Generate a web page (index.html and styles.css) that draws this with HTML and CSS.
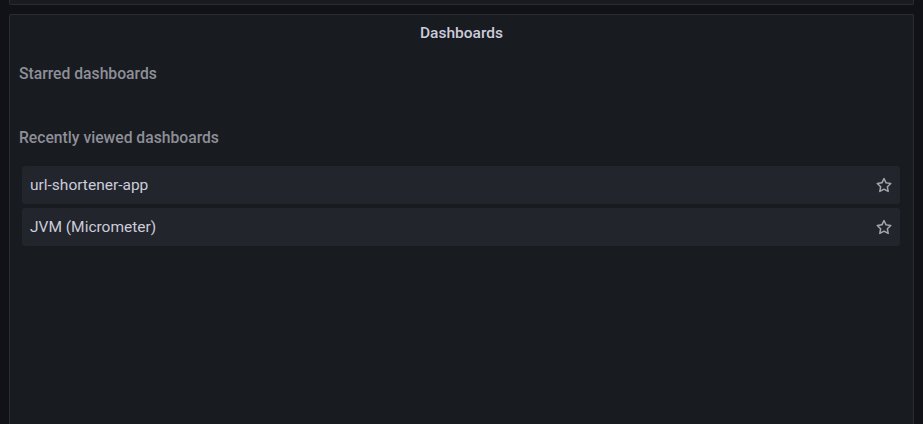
FILE: index.html
```html
<!DOCTYPE html>
<html lang="en">
<head>
<meta charset="utf-8">
<title>Dashboards</title>
<link rel="stylesheet" href="styles.css">
</head>
<body>
<div class="top-panel"></div>
<section class="panel">
  <header class="panel-header">Dashboards</header>
  <div class="panel-body">
    <h6 class="section-title starred">Starred dashboards</h6>
    <h6 class="section-title recent">Recently viewed dashboards</h6>
    <ul class="dash-list">
      <li class="dash-item">
        <span class="dash-name">url-shortener-app</span>
        <svg class="star" viewBox="0 0 24 24" width="18" height="18"><path d="M22,9.67A1,1,0,0,0,21.14,9l-5.69-.83L12.9,3a1,1,0,0,0-1.8,0L8.550,8.16,2.860,9a1,1,0,0,0-.81.68,1,1,0,0,0,.25,1l4.13,4-1,5.68A1,1,0,0,0,6.9,21.44L12,18.77l5.1,2.67a.93.93,0,0,0,.46.12,1,1,0,0,0,.59-.19,1,1,0,0,0,.4-1l-1-5.680,4.130-4A1,1,0,0,0,22,9.67Zm-6.15,4a1,1,0,0,0-.29.88l.72,4.2-3.760-2a1.06,1.06,0,0,0-.94,0l-3.76,2,.72-4.2a1,1,0,0,0-.29-.88l-3-3,4.21-.61a1,1,0,0,0,.76-.55L12,5.7l1.88,3.82a1,1,0,0,0,.76.55l4.21.61Z"/></svg>
      </li>
      <li class="dash-item">
        <span class="dash-name">JVM (Micrometer)</span>
        <svg class="star" viewBox="0 0 24 24" width="18" height="18"><path d="M22,9.67A1,1,0,0,0,21.14,9l-5.69-.83L12.9,3a1,1,0,0,0-1.8,0L8.550,8.16,2.860,9a1,1,0,0,0-.81.68,1,1,0,0,0,.25,1l4.13,4-1,5.68A1,1,0,0,0,6.9,21.44L12,18.77l5.1,2.67a.93.93,0,0,0,.46.12,1,1,0,0,0,.59-.19,1,1,0,0,0,.4-1l-1-5.680,4.130-4A1,1,0,0,0,22,9.67Zm-6.15,4a1,1,0,0,0-.29.88l.72,4.2-3.760-2a1.06,1.06,0,0,0-.94,0l-3.76,2,.72-4.2a1,1,0,0,0-.29-.88l-3-3,4.21-.61a1,1,0,0,0,.76-.55L12,5.7l1.88,3.82a1,1,0,0,0,.76.55l4.21.61Z"/></svg>
      </li>
    </ul>
  </div>
</section>
</body>
</html>
```
FILE: styles.css
```css
* { box-sizing: border-box; }
html, body {
  margin: 0;
  padding: 0;
  background: #111217;
  font-family: Roboto, "Noto Sans", sans-serif;
  color: #ccccdc;
  overflow: hidden;
  height: 424px;
}
.top-panel {
  margin-left: 9px;
  width: 905px;
  height: 5px;
  background: #181b1f;
  border: 1px solid #2a2c32;
  border-top: none;
  border-radius: 0 0 2px 2px;
}
.panel {
  margin: 9px 0 0 9px;
  width: 905px;
  height: 410px;
  background: #181b1f;
  border: 1px solid #2a2c32;
  border-bottom: none;
  border-radius: 2px 2px 0 0;
}
.panel-header {
  height: 36px;
  line-height: 36px;
  text-align: center;
  font-size: 15.5px;
  font-weight: 500;
  color: #ccccdc;
}
.panel-body {
  padding: 0 13px 0 9px;
}
.section-title {
  margin: 0;
  font-size: 15.7px;
  font-weight: 500;
  line-height: 22px;
  color: #8e8f99;
}
.starred { margin-top: 12px; }
.recent { margin-top: 42px; }
.dash-list {
  list-style: none;
  margin: 17px 0 0 3px;
  padding: 0;
  display: flex;
  flex-direction: column;
  gap: 4px;
}
.dash-item {
  height: 38px;
  background: #22252b;
  border-radius: 3px;
  display: flex;
  align-items: center;
  justify-content: space-between;
  padding: 0 7px 0 8px;
  font-size: 15.5px;
  color: #ccccdc;
}
.star {
  fill: #a3a4ad;
  display: block;
}
```
